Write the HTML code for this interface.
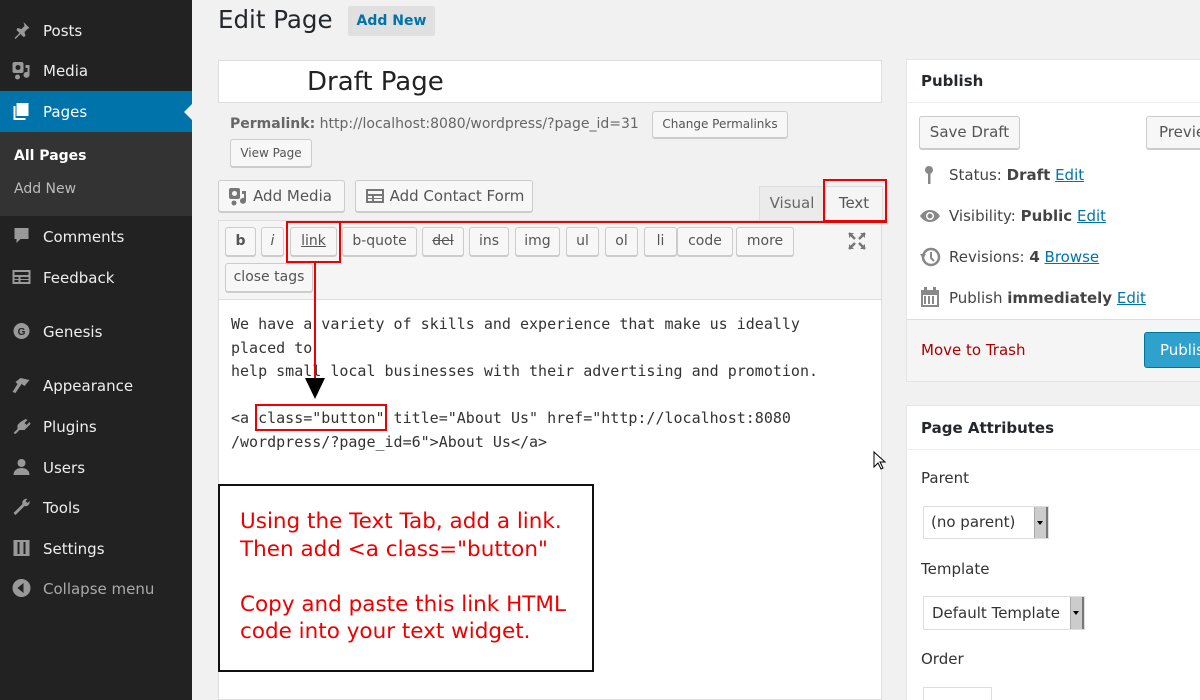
<!DOCTYPE html>
<html><head><meta charset="utf-8"><style>
*{box-sizing:border-box;margin:0;padding:0}
html,body{width:1200px;height:700px;overflow:hidden}
body{background:#f1f1f1;font-family:"DejaVu Sans","Liberation Sans",sans-serif;color:#444;position:relative}
.a{position:absolute}
#side{left:0;top:0;width:192px;height:700px;background:#222}
.mi{position:absolute;left:43px;font-size:15px;color:#eee;white-space:nowrap}
.ic{position:absolute;left:11px;width:21px;height:20px}
.btn{position:absolute;background:#f7f7f7;border:1px solid #ccc;border-radius:3px;font-size:13px;color:#555;text-align:center;box-shadow:0 1px 0 #ccc;white-space:nowrap}
.tb{position:absolute;top:227px;height:29px;background:#f7f7f7;border:1px solid #ccc;border-radius:3px;font-size:14px;color:#555;text-align:center;line-height:27px;box-shadow:0 1px 0 #ccc}
.red{position:absolute;border:2px solid #e00}
.box{position:absolute;background:#fff;border:1px solid #e5e5e5}
.lnk{color:#0073aa;text-decoration:underline}
.mono{font-family:"DejaVu Sans Mono","Liberation Mono",monospace;font-size:15px;color:#333;line-height:23.5px;white-space:pre}
</style></head><body>
<div id="side" class="a">
  <div class="a" style="left:0;top:91px;width:192px;height:41px;background:#0073aa"></div>
  <div class="a" style="left:184px;top:104px;width:0;height:0;border:8px solid transparent;border-right-color:#f1f1f1;border-left:0"></div>
  <div class="a" style="left:0;top:132px;width:192px;height:84px;background:#333"></div>
  <svg class="ic" style="top:20px" viewBox="0 0 20 20"><path d="M12 2l6 6-2 1-3 3 1 4-2 1-3-3-5 5-1-1 5-5-3-3 1-2 4 1 3-3z" fill="#999"/></svg>
  <div class="mi" style="top:22px">Posts</div>
  <svg class="ic" style="top:60px" viewBox="0 0 20 20"><rect x="1" y="2" width="11" height="11" rx="2" fill="#999"/><circle cx="6.5" cy="7.5" r="2.5" fill="#222"/><path d="M14 5h4v10a3 3 0 1 1-2-3V8h-2z" fill="#999"/><circle cx="6" cy="17" r="2.5" fill="#999"/></svg>
  <div class="mi" style="top:62px">Media</div>
  <svg class="ic" style="top:101px" viewBox="0 0 20 20"><rect x="5" y="2" width="12" height="13" fill="#fff"/><path d="M3 5v13h11" stroke="#fff" stroke-width="2" fill="none"/></svg>
  <div class="mi" style="top:103px;color:#fff">Pages</div>
  <div class="mi" style="left:14px;top:148px;font-size:14px;font-weight:bold;color:#fff">All Pages</div>
  <div class="mi" style="left:14px;top:181px;font-size:14px;color:#bbb">Add New</div>
  <svg class="ic" style="top:226px" viewBox="0 0 20 20"><path d="M3 2h14v11H9l-4 4v-4H3z" fill="#999"/></svg>
  <div class="mi" style="top:228px">Comments</div>
  <svg class="ic" style="top:267px" viewBox="0 0 20 20"><rect x="1" y="3" width="18" height="14" fill="#999"/><rect x="3" y="5" width="14" height="3" fill="#222"/><rect x="3" y="10" width="4" height="2" fill="#222"/><rect x="9" y="10" width="8" height="2" fill="#222"/><rect x="3" y="13" width="4" height="2" fill="#222"/><rect x="9" y="13" width="8" height="2" fill="#222"/></svg>
  <div class="mi" style="top:269px">Feedback</div>
  <svg class="ic" style="top:321px" viewBox="0 0 20 20"><circle cx="10" cy="10" r="8" fill="#999"/><text x="10" y="14" font-size="10" text-anchor="middle" fill="#222" font-family="Liberation Sans" font-weight="bold">G</text></svg>
  <div class="mi" style="top:323px">Genesis</div>
  <svg class="ic" style="top:375px" viewBox="0 0 20 20"><path d="M9 3l9 2-5 6-3-2-6 9-3-1 5-8-2-2z" fill="#999"/></svg>
  <div class="mi" style="top:377px">Appearance</div>
  <svg class="ic" style="top:416px" viewBox="0 0 20 20"><path d="M14 3l2 1-3 3 2 2 3-3 1 2-3 3-3 3H8l-4 4-2-1 4-4V9l3-3z" fill="#999"/></svg>
  <div class="mi" style="top:418px">Plugins</div>
  <svg class="ic" style="top:457px" viewBox="0 0 20 20"><circle cx="10" cy="6" r="4" fill="#999"/><path d="M2 18c0-5 4-7 8-7s8 2 8 7z" fill="#999"/></svg>
  <div class="mi" style="top:459px">Users</div>
  <svg class="ic" style="top:497px" viewBox="0 0 20 20"><path d="M16 2a4 4 0 0 0-5 5L2 16l2 2 9-9a4 4 0 0 0 5-5l-2 2-2-2z" fill="#999"/></svg>
  <div class="mi" style="top:499px">Tools</div>
  <svg class="ic" style="top:538px" viewBox="0 0 20 20"><rect x="2" y="2" width="16" height="16" fill="#999"/><path d="M7 4v12M13 4v12" stroke="#222" stroke-width="2"/></svg>
  <div class="mi" style="top:540px">Settings</div>
  <svg class="ic" style="top:578px" viewBox="0 0 20 20"><circle cx="10" cy="10" r="9" fill="#999"/><path d="M12 5l-6 5 6 5z" fill="#222"/></svg>
  <div class="mi" style="top:580px;color:#aaa">Collapse menu</div>
</div>

<div class="a" style="left:218px;top:5px;font-size:24.5px;color:#23282d">Edit Page</div>
<div class="a" style="left:348px;top:6px;width:87px;height:30px;background:#e0e0e0;border-radius:2px;color:#0073aa;font-size:14px;font-weight:bold;text-align:center;line-height:30px">Add New</div>

<div class="box" style="left:218px;top:60px;width:664px;height:43px;border-color:#ddd"></div>
<div class="a" style="left:307px;top:67px;font-size:26px;color:#222">Draft Page</div>
<div class="a" style="left:230px;top:116px;font-size:14px;color:#666"><b>Permalink:</b> http://localhost:8080/wordpress/?page_id=31</div>
<div class="btn" style="left:652px;top:111px;width:136px;height:27px;font-size:12px;line-height:25px">Change Permalinks</div>
<div class="btn" style="left:230px;top:139px;width:82px;height:28px;font-size:12px;line-height:26px">View Page</div>

<div class="btn" style="left:218px;top:180px;width:127px;height:32px;font-size:15px;line-height:30px;padding-left:22px">Add Media</div>
<svg class="a" style="left:228px;top:186px" width="20" height="20" viewBox="0 0 20 20"><rect x="1" y="2" width="11" height="11" rx="2" fill="#777"/><circle cx="6.5" cy="7.5" r="2.5" fill="#f7f7f7"/><path d="M14 5h4v10a3 3 0 1 1-2-3V8h-2z" fill="#777"/><circle cx="6" cy="17" r="2.5" fill="#777"/></svg>
<div class="btn" style="left:355px;top:180px;width:178px;height:32px;font-size:15px;line-height:30px;padding-left:26px">Add Contact Form</div>
<svg class="a" style="left:365px;top:186px" width="20" height="20" viewBox="0 0 20 20"><rect x="1" y="3" width="18" height="14" fill="#777"/><rect x="3" y="5" width="14" height="3" fill="#f7f7f7"/><rect x="3" y="10" width="4" height="2" fill="#f7f7f7"/><rect x="9" y="10" width="8" height="2" fill="#f7f7f7"/><rect x="3" y="13" width="4" height="2" fill="#f7f7f7"/><rect x="9" y="13" width="8" height="2" fill="#f7f7f7"/></svg>

<div class="a" style="left:759px;top:186px;width:66px;height:35px;background:#ebebeb;border:1px solid #ddd;border-bottom:0;font-size:15px;color:#666;text-align:center;line-height:32px">Visual</div>
<div class="a" style="left:825px;top:186px;width:58px;height:35px;background:#f5f5f5;border:1px solid #ddd;border-bottom:0;font-size:15px;color:#555;text-align:center;line-height:32px">Text</div>

<div class="a" style="left:218px;top:220px;width:664px;height:80px;background:#f5f5f5;border:1px solid #ddd"></div>
<div class="a" style="left:218px;top:300px;width:664px;height:400px;background:#fff;border:1px solid #ddd;border-top:0"></div>

<div class="tb" style="left:225px;width:31px;font-weight:bold">b</div>
<div class="tb" style="left:261px;width:23px;font-style:italic">i</div>
<div class="tb" style="left:290px;width:47px;text-decoration:underline">link</div>
<div class="tb" style="left:342px;width:75px">b-quote</div>
<div class="tb" style="left:422px;width:42px;text-decoration:line-through">del</div>
<div class="tb" style="left:469px;width:40px">ins</div>
<div class="tb" style="left:515px;width:45px">img</div>
<div class="tb" style="left:566px;width:33px">ul</div>
<div class="tb" style="left:605px;width:33px">ol</div>
<div class="tb" style="left:644px;width:33px">li</div>
<div class="tb" style="left:677px;width:56px">code</div>
<div class="tb" style="left:736px;width:58px">more</div>
<div class="tb" style="left:225px;top:263px;width:88px">close tags</div>
<svg class="a" style="left:847px;top:231px" width="20" height="20" viewBox="0 0 20 20"><path d="M2 2l6 6M18 2l-6 6M2 18l6-6M18 18l-6-6" stroke="#777" stroke-width="2.5"/><path d="M2 2h5L2 7zM18 2h-5l5 5zM2 18h5l-5-5zM18 18h-5l5-5z" fill="#777"/></svg>

<div class="a mono" style="left:231px;top:313px">We have a variety of skills and experience that make us ideally
placed to
help small local businesses with their advertising and promotion.

&lt;a class="button" title="About Us" href="http://localhost:8080
/wordpress/?page_id=6"&gt;About Us&lt;/a&gt;</div>

<!-- annotations -->
<div class="red" style="left:823px;top:179px;width:64px;height:43px"></div>
<div class="a" style="left:340px;top:221px;width:547px;height:2px;background:#e00"></div>
<div class="red" style="left:286px;top:221px;width:55px;height:42px"></div>
<div class="a" style="left:314px;top:262px;width:2px;height:118px;background:#e00"></div>
<svg class="a" style="left:305px;top:378px" width="20" height="22"><path d="M0 0h20L10 21z" fill="#000"/></svg>
<div class="red" style="left:255px;top:404px;width:132px;height:27px"></div>

<div class="a" style="left:218px;top:484px;width:376px;height:188px;background:#fff;border:2px solid #111;color:#e00;font-size:21.5px;line-height:27.5px;padding:22px 0 0 20px;white-space:nowrap">Using the Text Tab, add a link.<br>Then add &lt;a class="button"<br><br>Copy and paste this link HTML<br>code into your text widget.</div>

<svg class="a" style="left:873px;top:451px" width="14" height="20"><path d="M1 1v15l4-4 3 6 2-1-3-6h5z" fill="#fff" stroke="#000"/></svg>

<!-- publish box -->
<div class="box" style="left:906px;top:59px;width:300px;height:323px"></div>
<div class="a" style="left:906px;top:102px;width:294px;height:1px;background:#eee"></div>
<div class="a" style="left:921px;top:72px;font-size:15px;font-weight:bold;color:#23282d">Publish</div>
<div class="btn" style="left:919px;top:116px;width:101px;height:33px;font-size:15px;line-height:31px">Save Draft</div>
<div class="btn" style="left:1146px;top:116px;width:80px;height:33px;font-size:15px;line-height:31px;text-align:left;padding-left:12px">Preview</div>
<svg class="a" style="left:923px;top:165px" width="14" height="22"><circle cx="6" cy="5" r="4" fill="#888"/><rect x="5" y="7" width="2.5" height="12" fill="#888"/></svg>
<div class="a" style="left:949px;top:166px;font-size:15px;color:#444">Status: <b>Draft</b> <span class="lnk">Edit</span></div>
<svg class="a" style="left:919px;top:206px" width="22" height="20"><path d="M1 10c5-8 15-8 20 0-5 8-15 8-20 0z" fill="#888"/><circle cx="11" cy="10" r="4" fill="#fff"/><circle cx="11" cy="10" r="2.5" fill="#888"/></svg>
<div class="a" style="left:949px;top:207px;font-size:15px;color:#444">Visibility: <b>Public</b> <span class="lnk">Edit</span></div>
<svg class="a" style="left:919px;top:246px" width="22" height="22"><circle cx="12" cy="11" r="8" fill="none" stroke="#888" stroke-width="2.5"/><path d="M12 6v6l3 3" stroke="#888" stroke-width="2" fill="none"/><path d="M1 8h6L4 13z" fill="#888"/></svg>
<div class="a" style="left:949px;top:248px;font-size:15px;color:#444">Revisions: <b>4</b> <span class="lnk">Browse</span></div>
<svg class="a" style="left:919px;top:286px" width="22" height="22"><rect x="2" y="4" width="18" height="17" fill="#888"/><rect x="4" y="9" width="14" height="10" fill="#fff"/><path d="M6 10v8M10 10v8M14 10v8" stroke="#888" stroke-width="2"/><rect x="5" y="1" width="3" height="5" fill="#888"/><rect x="14" y="1" width="3" height="5" fill="#888"/></svg>
<div class="a" style="left:949px;top:289px;font-size:15px;color:#444">Publish <b>immediately</b> <span class="lnk">Edit</span></div>
<div class="a" style="left:907px;top:319px;width:293px;height:62px;background:#f5f5f5;border-top:1px solid #ddd"></div>
<div class="a" style="left:921px;top:341px;font-size:15px;color:#a00">Move to Trash</div>
<div class="a" style="left:1144px;top:332px;width:80px;height:36px;background:#2ea2cc;border:1px solid #0074a2;border-radius:3px;color:#fff;font-size:15px;line-height:34px;padding-left:15px">Publish</div>

<!-- page attributes -->
<div class="box" style="left:906px;top:405px;width:300px;height:300px"></div>
<div class="a" style="left:906px;top:449px;width:294px;height:1px;background:#eee"></div>
<div class="a" style="left:921px;top:419px;font-size:15px;font-weight:bold;color:#23282d">Page Attributes</div>
<div class="a" style="left:921px;top:469px;font-size:15px;color:#333">Parent</div>
<div class="a" style="left:923px;top:506px;width:126px;height:33px;background:#fff;border:1px solid #ddd;font-size:15px;color:#333;line-height:31px;padding-left:7px">(no parent)</div>
<div class="a" style="left:1034px;top:507px;width:14px;height:31px;background:#ccc;border-left:1px solid #aaa;border-right:2px solid #777"></div>
<div class="a" style="left:1037px;top:521px;border:3px solid transparent;border-top:4px solid #000"></div>
<div class="a" style="left:921px;top:560px;font-size:15px;color:#333">Template</div>
<div class="a" style="left:923px;top:596px;width:162px;height:34px;background:#fff;border:1px solid #ddd;font-size:15px;color:#333;line-height:32px;padding-left:8px">Default Template</div>
<div class="a" style="left:1070px;top:597px;width:14px;height:32px;background:#ccc;border-left:1px solid #aaa;border-right:2px solid #777"></div>
<div class="a" style="left:1073px;top:611px;border:3px solid transparent;border-top:4px solid #000"></div>
<div class="a" style="left:921px;top:650px;font-size:15px;color:#333">Order</div>
<div class="a" style="left:923px;top:687px;width:69px;height:13px;background:#fff;border:1px solid #ddd;border-bottom:0"></div>
</body></html>
